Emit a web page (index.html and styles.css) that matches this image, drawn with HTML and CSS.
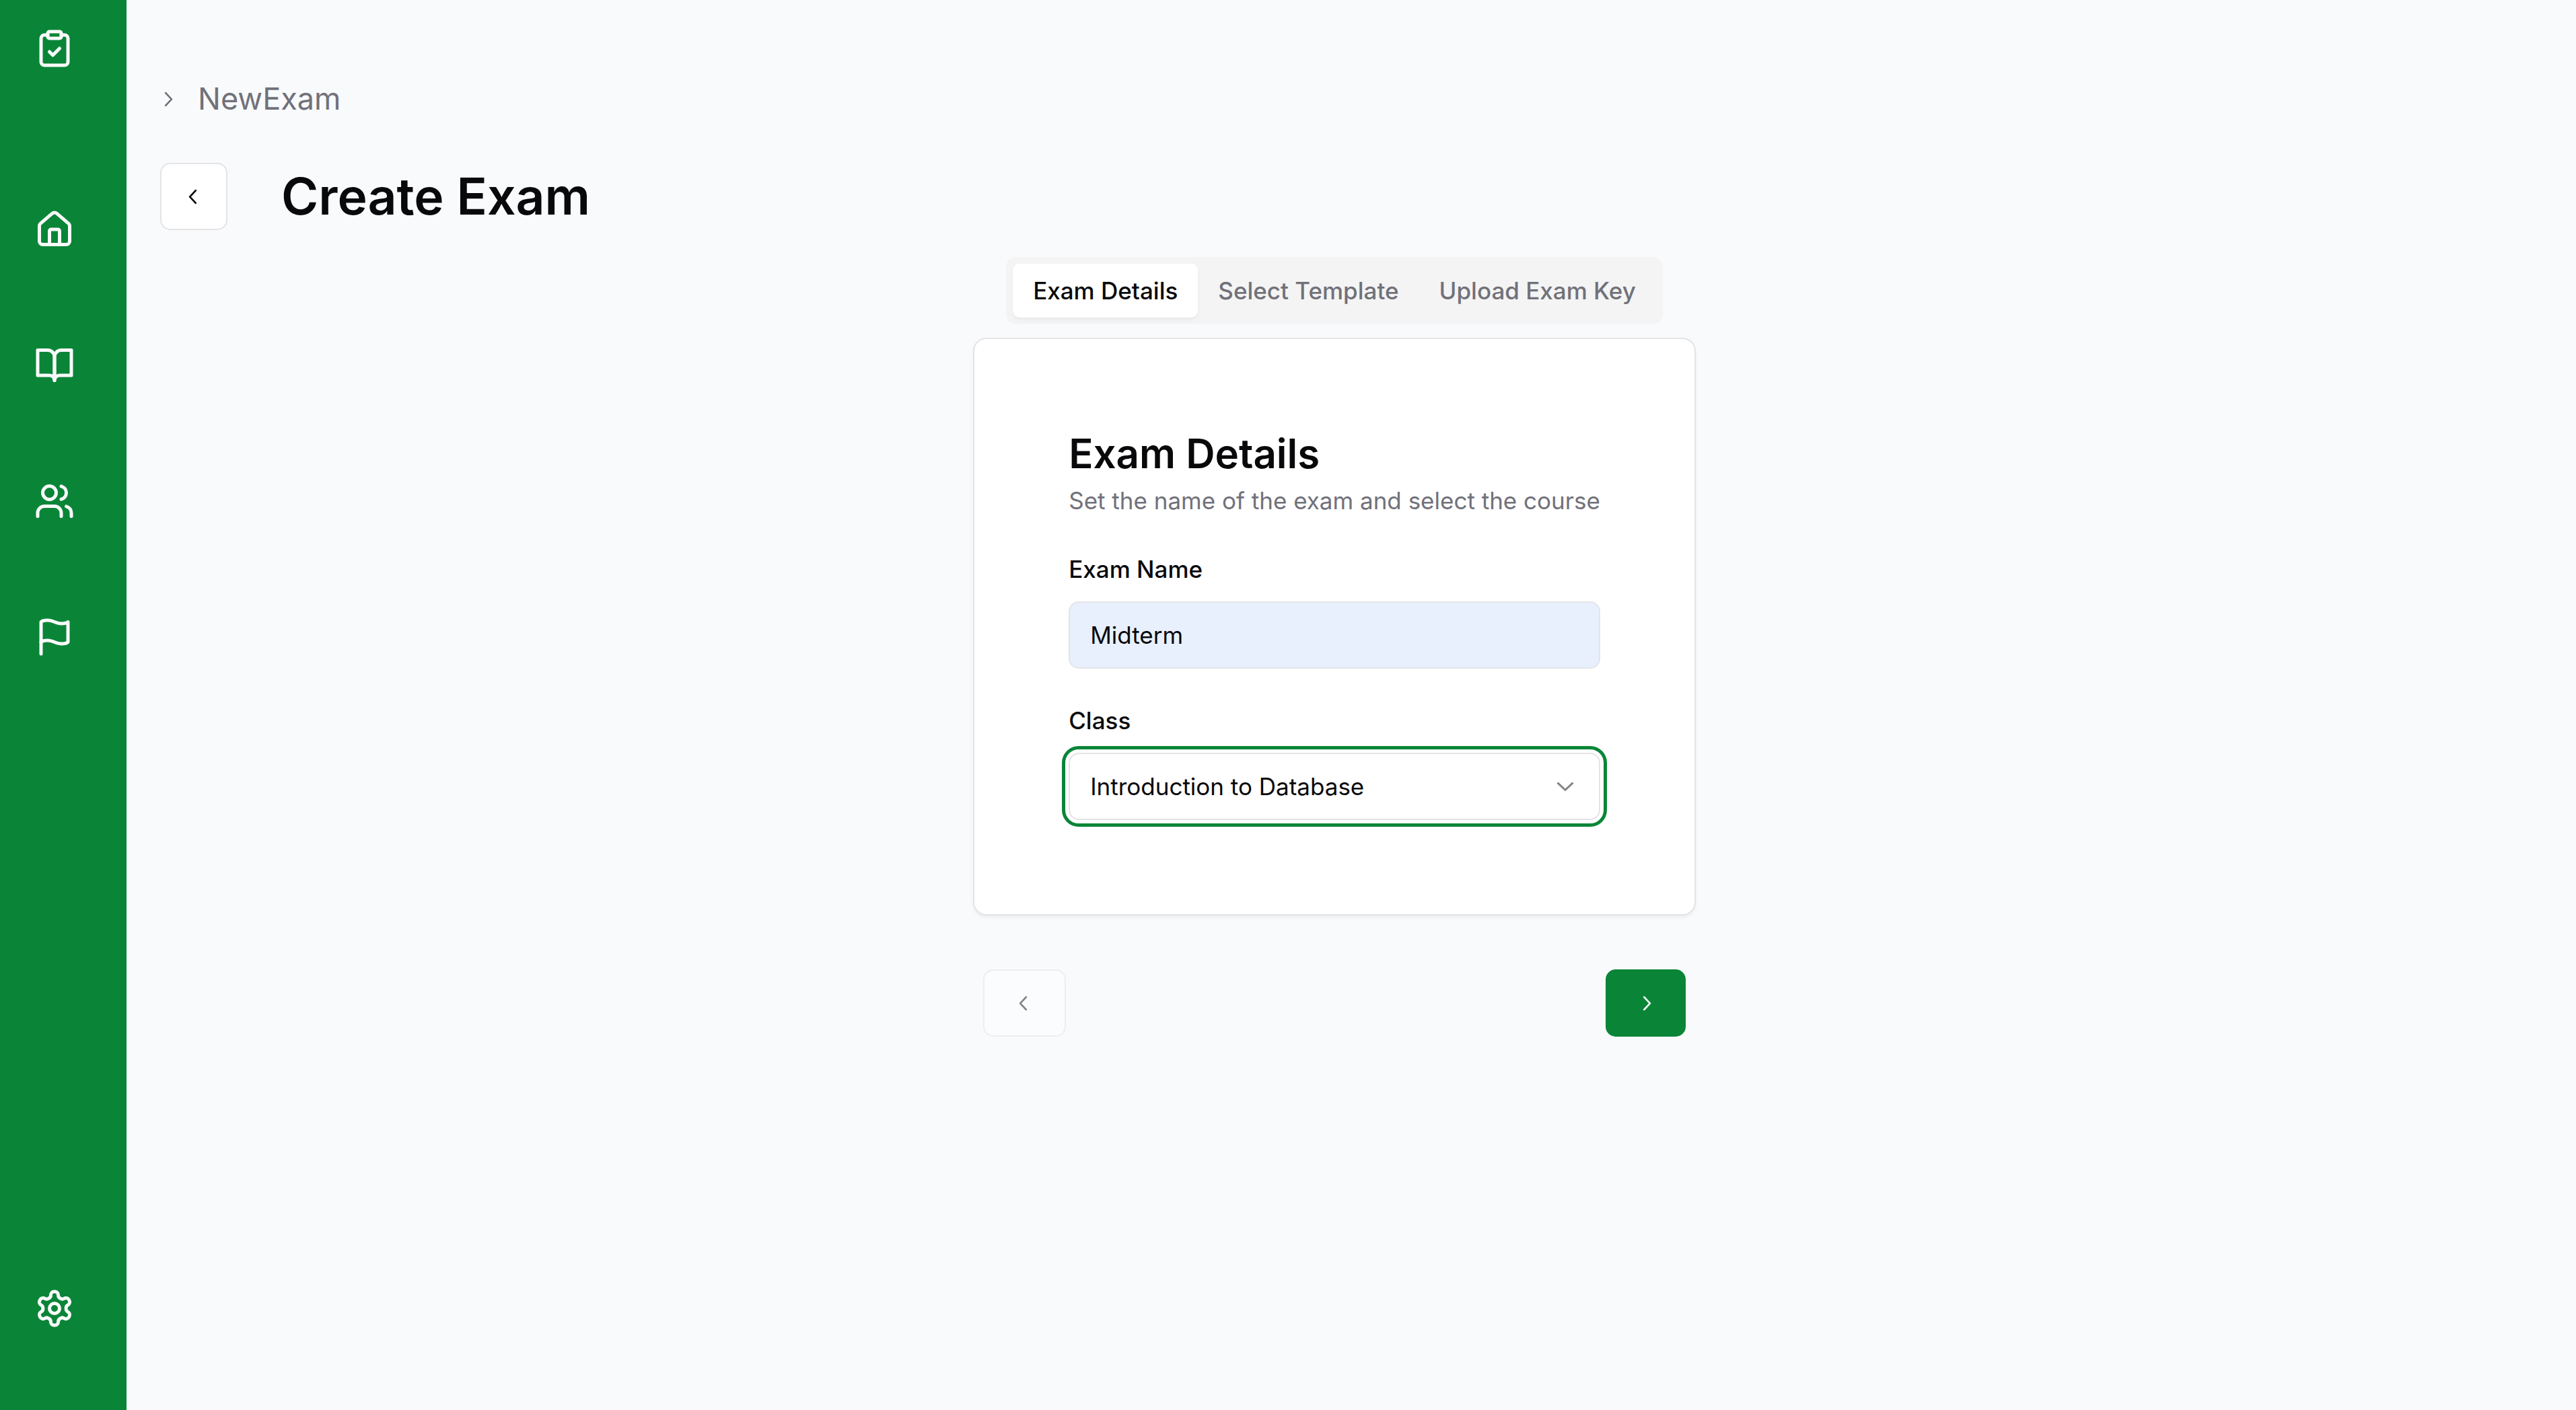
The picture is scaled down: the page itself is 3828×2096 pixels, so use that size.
FILE: index.html
```html
<!DOCTYPE html>
<html lang="en">
<head>
<meta charset="utf-8">
<title>Create Exam</title>
<meta name="viewport" content="width=device-width, initial-scale=1">
<link rel="stylesheet" href="styles.css">
</head>
<body>
<div class="app">
  <aside class="sidebar">
    <a class="side-link" href="#" aria-label="Exams">
      <svg class="icon" viewBox="0 0 24 24"><rect width="8" height="4" x="8" y="2" rx="1" ry="1"/><path d="M16 4h2a2 2 0 0 1 2 2v14a2 2 0 0 1-2 2H6a2 2 0 0 1-2-2V6a2 2 0 0 1 2-2h2"/><path d="m9 14 2 2 4-4"/></svg>
    </a>
    <nav class="side-nav" aria-label="Main">
      <a class="side-link" href="#" aria-label="Home">
        <svg class="icon" viewBox="0 0 24 24"><path d="M15 21v-8a1 1 0 0 0-1-1h-4a1 1 0 0 0-1 1v8"/><path d="M3 10a2 2 0 0 1 .709-1.528l7-5.999a2 2 0 0 1 2.582 0l7 5.999A2 2 0 0 1 21 10v9a2 2 0 0 1-2 2H5a2 2 0 0 1-2-2z"/></svg>
      </a>
      <a class="side-link" href="#" aria-label="Courses">
        <svg class="icon" viewBox="0 0 24 24"><path d="M2 3h6a4 4 0 0 1 4 4v14a3 3 0 0 0-3-3H2z"/><path d="M22 3h-6a4 4 0 0 0-4 4v14a3 3 0 0 1 3-3h7z"/></svg>
      </a>
      <a class="side-link" href="#" aria-label="Users">
        <svg class="icon" viewBox="0 0 24 24"><path d="M16 21v-2a4 4 0 0 0-4-4H6a4 4 0 0 0-4 4v2"/><circle cx="9" cy="7" r="4"/><path d="M22 21v-2a4 4 0 0 0-3-3.87"/><path d="M16 3.13a4 4 0 0 1 0 7.75"/></svg>
      </a>
      <a class="side-link" href="#" aria-label="Reports">
        <svg class="icon" viewBox="0 0 24 24"><path d="M4 15s1-1 4-1 5 2 8 2 4-1 4-1V3s-1 1-4 1-5-2-8-2-4 1-4 1z"/><path d="M4 22v-7"/></svg>
      </a>
    </nav>
    <a class="side-link" href="#" aria-label="Settings">
      <svg class="icon" viewBox="0 0 24 24"><path d="M12.22 2h-.44a2 2 0 0 0-2 2v.18a2 2 0 0 1-1 1.73l-.43.25a2 2 0 0 1-2 0l-.15-.08a2 2 0 0 0-2.73.73l-.22.38a2 2 0 0 0 .73 2.73l.15.1a2 2 0 0 1 1 1.72v.51a2 2 0 0 1-1 1.74l-.15.09a2 2 0 0 0-.73 2.73l.22.38a2 2 0 0 0 2.73.73l.15-.08a2 2 0 0 1 2 0l.43.25a2 2 0 0 1 1 1.73V20a2 2 0 0 0 2 2h.44a2 2 0 0 0 2-2v-.18a2 2 0 0 1 1-1.73l.43-.25a2 2 0 0 1 2 0l.15.08a2 2 0 0 0 2.73-.73l.22-.39a2 2 0 0 0-.73-2.73l-.15-.08a2 2 0 0 1-1-1.74v-.5a2 2 0 0 1 1-1.74l.15-.09a2 2 0 0 0 .73-2.73l-.22-.38a2 2 0 0 0-2.73-.73l-.15.08a2 2 0 0 1-2 0l-.43-.25a2 2 0 0 1-1-1.73V4a2 2 0 0 0-2-2z"/><circle cx="12" cy="12" r="3"/></svg>
    </a>
  </aside>

  <main class="main">
    <nav class="breadcrumb" aria-label="Breadcrumb">
      <svg class="chevron" viewBox="0 0 15 15"><path d="M6.1584 3.13508C6.35985 2.94621 6.67627 2.95642 6.86514 3.15788L10.6151 7.15788C10.7954 7.3502 10.7954 7.64949 10.6151 7.84182L6.86514 11.8418C6.67627 12.0433 6.35985 12.0535 6.1584 11.8646C5.95694 11.6757 5.94673 11.3593 6.1356 11.1579L9.565 7.49985L6.1356 3.84182C5.94673 3.64036 5.95694 3.32394 6.1584 3.13508Z"/></svg>
      <a class="crumb" href="#">NewExam</a>
    </nav>
    <header class="page-head">
      <button class="btn btn-square" type="button" aria-label="Back">
        <svg class="chevron" viewBox="0 0 15 15"><path d="M8.84182 3.13514C9.04327 3.32401 9.05348 3.64042 8.86462 3.84188L5.43521 7.49991L8.86462 11.1579C9.05348 11.3594 9.04327 11.6758 8.84182 11.8647C8.64036 12.0535 8.32394 12.0433 8.13508 11.8419L4.38508 7.84188C4.20477 7.64955 4.20477 7.35027 4.38508 7.15794L8.13508 3.15794C8.32394 2.95648 8.64036 2.94628 8.84182 3.13514Z"/></svg>
      </button>
      <h1 class="page-title">Create Exam</h1>
    </header>

    <div class="wizard">
      <div class="tabs" role="tablist">
        <button class="tab tab-active" type="button" role="tab" aria-selected="true">Exam Details</button>
        <button class="tab" type="button" role="tab" aria-selected="false">Select Template</button>
        <button class="tab" type="button" role="tab" aria-selected="false">Upload Exam Key</button>
      </div>

      <form class="card">
        <h2 class="card-title">Exam Details</h2>
        <p class="card-text">Set the name of the exam and select the course</p>
        <div class="field">
          <label class="label" for="exam-name">Exam Name</label>
          <input class="control control-filled" id="exam-name" type="text" value="Midterm">
        </div>
        <div class="field">
          <label class="label" for="exam-class">Class</label>
          <div class="select-wrap">
            <select class="control control-focused" id="exam-class">
              <option>Introduction to Database</option>
            </select>
            <svg class="select-arrow" viewBox="0 0 15 15"><path d="M3.13523 6.15803C3.3241 5.95657 3.64052 5.94637 3.84197 6.13523L7.5 9.56464L11.158 6.13523C11.3595 5.94637 11.6759 5.95657 11.8648 6.15803C12.0536 6.35949 12.0434 6.67591 11.842 6.86477L7.84197 10.6148C7.64964 10.7951 7.35036 10.7951 7.15803 10.6148L3.15803 6.86477C2.95657 6.67591 2.94637 6.35949 3.13523 6.15803Z"/></svg>
          </div>
        </div>
      </form>

      <div class="pager">
        <button class="btn" type="button" aria-label="Previous" disabled>
          <svg class="chevron" viewBox="0 0 15 15"><path d="M8.84182 3.13514C9.04327 3.32401 9.05348 3.64042 8.86462 3.84188L5.43521 7.49991L8.86462 11.1579C9.05348 11.3594 9.04327 11.6758 8.84182 11.8647C8.64036 12.0535 8.32394 12.0433 8.13508 11.8419L4.38508 7.84188C4.20477 7.64955 4.20477 7.35027 4.38508 7.15794L8.13508 3.15794C8.32394 2.95648 8.64036 2.94628 8.84182 3.13514Z"/></svg>
        </button>
        <button class="btn btn-primary" type="button" aria-label="Next">
          <svg class="chevron" viewBox="0 0 15 15"><path d="M6.1584 3.13508C6.35985 2.94621 6.67627 2.95642 6.86514 3.15788L10.6151 7.15788C10.7954 7.3502 10.7954 7.64949 10.6151 7.84182L6.86514 11.8418C6.67627 12.0433 6.35985 12.0535 6.1584 11.8646C5.95694 11.6757 5.94673 11.3593 6.1356 11.1579L9.565 7.49985L6.1356 3.84182C5.94673 3.64036 5.95694 3.32394 6.1584 3.13508Z"/></svg>
        </button>
      </div>
    </div>
  </main>
</div>
</body>
</html>
```
FILE: styles.css
```css
* {
  box-sizing: border-box;
}

body {
  margin: 0;
  background: #f8fafc;
  color: #09090b;
  font-family: Inter, "Liberation Sans", sans-serif;
  font-size: 35px;
  line-height: 50px;
}

button,
input,
select {
  font: inherit;
  color: inherit;
}

h1,
h2,
p {
  margin: 0;
}

.app {
  display: flex;
  min-height: 100vh;
}

.sidebar {
  display: flex;
  flex-direction: column;
  flex: none;
  width: 188px;
  padding: 42px 51px 121px;
  background: #0a8537;
  color: #fafafa;
}

.side-nav {
  display: flex;
  flex-direction: column;
  flex: 1;
  gap: 142px;
  padding-top: 209px;
}

.side-link {
  display: block;
  width: 60px;
  height: 60px;
  color: inherit;
}

.icon {
  display: block;
  width: 60px;
  height: 60px;
  fill: none;
  stroke: currentColor;
  stroke-width: 2;
  stroke-linecap: round;
  stroke-linejoin: round;
}

.chevron {
  display: block;
  flex: none;
  width: 35px;
  height: 35px;
  fill: currentColor;
  stroke: currentColor;
  stroke-width: 0.15;
}

.main {
  flex: 1;
  padding: 112px 50px 50px 0;
}

.breadcrumb {
  display: flex;
  align-items: center;
  gap: 28px;
  height: 70px;
  padding-left: 43px;
  color: #71717a;
  font-size: 45px;
}

.crumb {
  color: inherit;
  text-decoration: none;
}

.page-head {
  display: flex;
  align-items: center;
  gap: 80px;
  margin-top: 60px;
  padding-left: 50px;
}

.page-title {
  font-size: 75px;
  line-height: 90px;
  font-weight: 600;
}

.btn {
  display: flex;
  align-items: center;
  justify-content: center;
  height: 100px;
  padding: 0 42px;
  border: 2px solid #e4e4e7;
  border-radius: 15px;
  background: #fff;
}

.btn:disabled {
  opacity: 0.5;
}

.btn-square {
  width: 100px;
  padding: 0;
}

.btn-primary {
  border: 0;
  background: #0a8537;
  color: #fafafa;
}

.wizard {
  display: flex;
  flex-direction: column;
  align-items: center;
  width: fit-content;
  margin: 40px auto 0;
}

.tabs {
  display: flex;
  padding: 10px;
  border-radius: 15px;
  background: #f4f4f4;
  color: #71717a;
}

.tab {
  height: 80px;
  padding: 0 30px;
  border: 0;
  border-radius: 10px;
  background: none;
  font-weight: 500;
}

.tab-active {
  background: #fff;
  color: #09090b;
  box-shadow: 0 3px 5px rgba(0, 0, 0, 0.05);
}

.card {
  margin-top: 20px;
  padding: 140px;
  border: 2px solid #e4e4e7;
  border-radius: 20px;
  background: #fff;
  box-shadow: 0 3px 5px rgba(0, 0, 0, 0.05);
}

.card-title {
  font-size: 60px;
  line-height: 60px;
  font-weight: 600;
}

.card-text {
  margin-top: 15px;
  color: #71717a;
}

.field {
  display: flex;
  flex-direction: column;
  gap: 23px;
  margin-top: 52px;
}

.label {
  font-weight: 500;
}

.control {
  display: block;
  width: 100%;
  height: 100px;
  padding: 0 30px;
  border: 2px solid #e4e4e7;
  border-radius: 15px;
  background: #fff;
  appearance: none;
}

.control-filled {
  background: #e8f0fe;
}

.control-focused {
  outline: 5px solid #0a8537;
  outline-offset: 5px;
}

.select-wrap {
  position: relative;
}

.select-arrow {
  position: absolute;
  top: 28px;
  right: 32px;
  width: 40px;
  height: 40px;
  fill: currentColor;
  stroke: currentColor;
  stroke-width: 0.15;
  opacity: 0.5;
  pointer-events: none;
}

.pager {
  display: flex;
  justify-content: space-between;
  align-self: stretch;
  margin-top: 80px;
  padding: 0 15px;
}
```
